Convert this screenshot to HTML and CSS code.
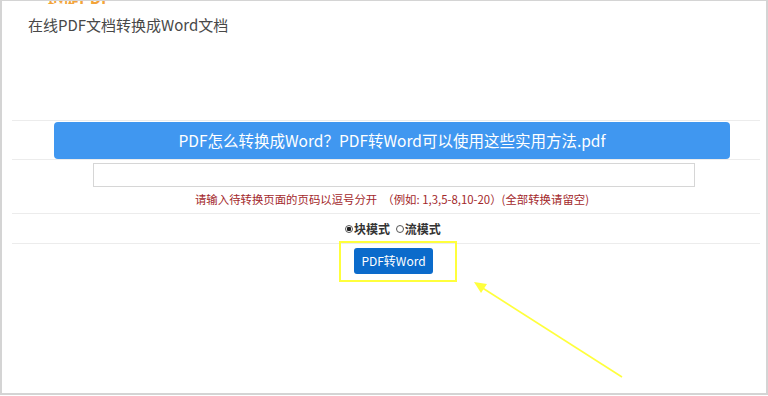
FILE: index.html
```html
<!DOCTYPE html>
<html lang="zh-CN">
<head>
    <meta charset="UTF-8">
    <meta name="viewport" content="width=device-width, initial-scale=1.0">
    <title>在线PDF文档转换成Word文档</title>
    <link rel="stylesheet" href="styles.css">
</head>
<body>

    <div class="frame">
        <!-- Logo (terpotong di atas) -->
        <div class="brand"><span>迅捷PDF</span></div>

        <h1 class="title">在线PDF文档转换成Word文档</h1>

        <div class="form">
            <div class="row row-file">
                <div class="file-name">PDF怎么转换成Word？PDF转Word可以使用这些实用方法.pdf</div>
            </div>
            <div class="row row-pages">
                <input class="pages-input" type="text">
                <p class="hint">请输入待转换页面的页码以逗号分开 &nbsp;（例如: 1,3,5-8,10-20）(全部转换请留空)</p>
            </div>
            <div class="row row-mode">
                <label><input type="radio" name="mode" checked>块模式</label>
                <label><input type="radio" name="mode">流模式</label>
            </div>
            <div class="row row-btn">
                <button class="convert-btn">PDF转Word</button>
            </div>
        </div>

        <!-- Tanda kuning di atas tombol -->
        <div class="mark-box"></div>
        <svg class="mark-arrow" width="768" height="396" viewBox="0 0 768 396">
            <line x1="622" y1="377" x2="481" y2="287" stroke="#ffff3c" stroke-width="1.6"/>
            <polygon points="474,282 487,284 481,293" fill="#ffff3c"/>
        </svg>
    </div>

</body>
</html>
```

FILE: styles.css
```css
body {
    margin: 0;
    padding: 0;
    background: #ffffff;
    font-family: "Noto Sans CJK SC", "Noto Sans", sans-serif;
}
.frame {
    position: relative;
    box-sizing: border-box;
    width: 768px;
    height: 395px;
    border: 1px solid #d4d4d4;
    border-left-width: 2px;
    border-right-width: 2px;
    border-bottom-width: 2px;
    overflow: hidden;
}
.brand {
    height: 3px;
    padding-left: 45px;
    display: flex;
    align-items: flex-end;
    overflow: hidden;
}
.brand span {
    font-size: 16px;
    font-weight: bold;
    line-height: 14px;
    color: #f3a43a;
    flex: none;
}
.title {
    margin: 8px 0 0 26px;
    font-size: 15px;
    font-weight: normal;
    line-height: 26px;
    color: #484848;
}
.form {
    margin: 82px 6px 0 10px;
}
.row {
    border-top: 1px solid #ececec;
    text-align: center;
}
.row-file {
    height: 37px;
    padding-top: 1px;
}
.file-name {
    margin-left: 42px;
    width: 676px;
    height: 37px;
    line-height: 36px;
    background: #4097f0;
    border-radius: 4px;
    color: #ffffff;
    font-size: 15.5px;
}
.row-pages {
    height: 50px;
    padding-top: 3px;
}
.pages-input {
    display: block;
    box-sizing: border-box;
    margin-left: 81px;
    width: 602px;
    height: 24px;
    border: 1px solid #d6d6d6;
    padding: 0;
}
.hint {
    margin: 3px 0 0 12px;
    font-size: 11.4px;
    line-height: 18px;
    color: #a3282b;
}
.row-mode {
    height: 29px;
    line-height: 28px;
    padding-left: 14px;
    font-size: 12px;
    font-weight: bold;
    color: #333333;
}
.row-mode label {
    display: inline-flex;
    align-items: center;
}
.row-mode label + label {
    margin-left: 3px;
}
.row-mode input {
    appearance: none;
    width: 8px;
    height: 8px;
    margin: 0 1px 0 0;
    border: 1px solid #555555;
    border-radius: 50%;
    box-sizing: border-box;
}
.row-mode input:checked {
    background: radial-gradient(circle, #222222 0 2px, #ffffff 2.5px);
}
.row-btn {
    padding-top: 3px;
}
.convert-btn {
    width: 79px;
    height: 26px;
    margin-left: 15px;
    border: none;
    border-radius: 3px;
    background: #0b6bcb;
    color: #ffffff;
    font-family: "Noto Sans CJK SC", "Noto Sans", sans-serif;
    font-size: 12px;
    cursor: pointer;
}
.mark-box {
    position: absolute;
    left: 337px;
    top: 240px;
    width: 114px;
    height: 37px;
    border: 2px solid #ffff3c;
}
.mark-arrow {
    position: absolute;
    left: -2px;
    top: -1px;
    pointer-events: none;
}
```
